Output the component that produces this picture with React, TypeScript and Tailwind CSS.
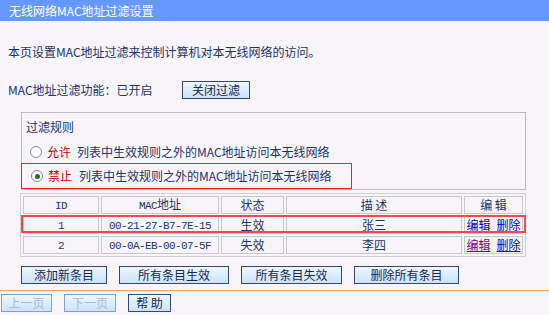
import React from "react";

const font = { fontFamily: '"Noto Sans CJK SC", "Liberation Sans", sans-serif' };

function Btn({ w, children, disabled }: { w: string; children: React.ReactNode; disabled?: boolean }) {
  return (
    <button
      className={
        "h-[18px] flex items-center justify-center text-[12px] leading-none bg-gradient-to-b from-[#EEF7FF] to-[#C9E3FA] border " +
        (disabled ? "border-[#8C9CC0] text-[#A9B8D4] " : "border-[#3A4670] text-[#1A2750] ") +
        w
      }
    >
      {children}
    </button>
  );
}

function Radio({ checked }: { checked?: boolean }) {
  return (
    <span className="w-[12px] h-[12px] rounded-full border border-[#7D8A9C] bg-white flex items-center justify-center shrink-0">
      {checked && <span className="w-[5px] h-[5px] rounded-full bg-[#2B6B2B]" />}
    </span>
  );
}

function Links({ visited }: { visited?: boolean }) {
  return (
    <span className="inline-flex gap-[6px]">
      <span className={"underline " + (visited ? "text-[#800080]" : "text-[#0000CC]")}>编辑</span>
      <span className="underline text-[#0000CC]">删除</span>
    </span>
  );
}

export default function App() {
  const mono = "font-['Liberation_Mono',monospace] text-[11px] tracking-[-0.6px]";
  const td = "border border-[#C9C9C9] h-[16px] p-0 text-center text-[12px] leading-[14px] text-[#1F3366] align-middle";
  return (
    <div style={font} className="w-[549px] h-[315px] overflow-hidden bg-[#F7F5F9] text-[#1F3366] leading-[16px]">
      <div className="h-[21px] bg-[#6699FF] text-white text-[12px] leading-[21px] pl-[9px]">无线网络MAC地址过滤设置</div>

      <div className="mt-[23px] h-[16px] leading-[16px] text-[12px] pl-[8px]">本页设置MAC地址过滤来控制计算机对本无线网络的访问。</div>

      <div className="mt-[20px] h-[19px] flex items-center pl-[8px] text-[12px]">
        <span className="w-[174px]">MAC地址过滤功能：已开启</span>
        <Btn w="w-[68px]">关闭过滤</Btn>
      </div>

      <div className="ml-[21px] mt-[13px] w-[505px] h-[78px] border border-[#BDBDBD] text-[12px]">
        <div className="h-[28px] leading-[28px] pl-[4px]">过滤规则</div>
        <div className="h-[22px] flex items-center pl-[8px]">
          <Radio />
          <span className="ml-[5px] text-[#CC0000]">允许</span>
          <span className="ml-[6px]">列表中生效规则之外的MAC地址访问本无线网络</span>
        </div>
        <div className="h-[26px] w-[331px] -ml-[1px] flex items-center pl-[9px] border border-[#E8262B]">
          <Radio checked />
          <span className="ml-[5px] text-[#CC0000]">禁止</span>
          <span className="ml-[7px]">列表中生效规则之外的MAC地址访问本无线网络</span>
        </div>
      </div>

      <div className="relative ml-[20px] mt-[3px] w-[506px]">
        <table className="w-[506px] border border-[#D2D2D2] border-separate border-spacing-[2px] table-fixed">
          <colgroup>
            <col className="w-[76px]" />
            <col className="w-[118px]" />
            <col className="w-[63px]" />
            <col className="w-[176px]" />
            <col className="w-[59px]" />
          </colgroup>
          <tbody>
            <tr>
              <td className={td}><span className={mono}>ID</span></td>
              <td className={td}><span className={mono}>MAC</span>地址</td>
              <td className={td}>状态</td>
              <td className={td}>描 述</td>
              <td className={td}>编 辑</td>
            </tr>
            <tr>
              <td className={td}><span className={mono}>1</span></td>
              <td className={td}><span className={mono}>00-21-27-B7-7E-15</span></td>
              <td className={td}>生效</td>
              <td className={td}>张三</td>
              <td className={td}><Links /></td>
            </tr>
            <tr>
              <td className={td}><span className={mono}>2</span></td>
              <td className={td}><span className={mono}>00-0A-EB-00-07-5F</span></td>
              <td className={td}>失效</td>
              <td className={td}>李四</td>
              <td className={td}><Links visited /></td>
            </tr>
          </tbody>
        </table>
        <div className="absolute left-[1px] top-[22px] w-[505px] h-[18px] border-2 border-[#EF4A4F] pointer-events-none" />
      </div>

      <div className="mt-[9px] ml-[21px] flex gap-[12px]">
        <Btn w="w-[86px]">添加新条目</Btn>
        <Btn w="w-[110px]">所有条目生效</Btn>
        <Btn w="w-[101px]">所有条目失效</Btn>
        <Btn w="w-[105px]">删除所有条目</Btn>
      </div>

      <div className="mt-[6px] h-[1px] bg-[#F3A85E]" />
      <div className="h-[1px] bg-[#FBE3C6]" />

      <div className="mt-[2px] ml-[1px] flex gap-[12px]">
        <Btn w="w-[51px]" disabled>上一页</Btn>
        <Btn w="w-[52px]" disabled>下一页</Btn>
        <Btn w="w-[43px]">帮 助</Btn>
      </div>
    </div>
  );
}
